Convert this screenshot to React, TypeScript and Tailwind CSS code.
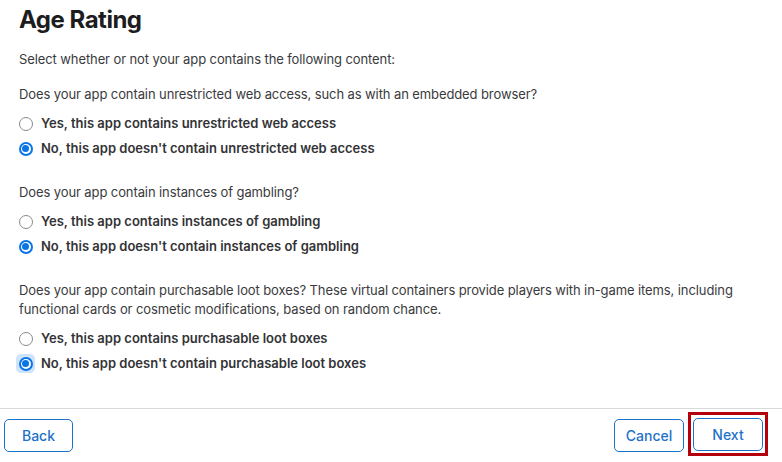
import React from "react";

function Radio({ label, checked, focused }: { label: string; checked?: boolean; focused?: boolean }) {
  return (
    <div className="flex h-[25px] items-center">
      <span
        className={
          "flex h-[19px] w-[19px] items-center justify-center rounded-[5px] " +
          (focused ? "bg-[#cfe3fb]" : "")
        }
      >
        {checked ? (
          <span className="flex h-[14px] w-[14px] items-center justify-center rounded-full bg-[#0a76e6]">
            <span className="flex h-[10px] w-[10px] items-center justify-center rounded-full bg-white">
              <span className="h-[7px] w-[7px] rounded-full bg-[#0a76e6]" />
            </span>
          </span>
        ) : (
          <span className="h-[14px] w-[14px] rounded-full border border-[#8a8a8e] bg-white" />
        )}
      </span>
      <span className="ml-[6px] text-[13px] font-semibold text-[#333336]">{label}</span>
    </div>
  );
}

function Section({ question, yes, no, focused }: { question: React.ReactNode; yes: string; no: string; focused?: boolean }) {
  return (
    <div>
      <p className="text-[13px] leading-[19px] tracking-[-0.1px] text-[#3a3a3c]">{question}</p>
      <div className="mt-[7px] -ml-[3px]">
        <Radio label={yes} />
        <Radio label={no} checked focused={focused} />
      </div>
    </div>
  );
}

export default function App() {
  return (
    <div className="h-[462px] w-[782px] overflow-hidden bg-white font-['Inter',sans-serif]">
      <div className="px-[19px]">
        <h1 className="h-[40px] text-[24px] font-bold leading-[40px] tracking-[-0.5px] text-[#1d1d1f]">Age Rating</h1>
        <p className="mt-[10px] text-[13px] leading-[19px] tracking-[-0.1px] text-[#3a3a3c]">
          Select whether or not your app contains the following content:
        </p>
        <div className="mt-[16px] flex flex-col gap-[22px]">
          <Section
            question="Does your app contain unrestricted web access, such as with an embedded browser?"
            yes="Yes, this app contains unrestricted web access"
            no="No, this app doesn't contain unrestricted web access"
          />
          <Section
            question="Does your app contain instances of gambling?"
            yes="Yes, this app contains instances of gambling"
            no="No, this app doesn't contain instances of gambling"
          />
          <Section
            question="Does your app contain purchasable loot boxes? These virtual containers provide players with in-game items, including functional cards or cosmetic modifications, based on random chance."
            yes="Yes, this app contains purchasable loot boxes"
            no="No, this app doesn't contain purchasable loot boxes"
            focused
          />
        </div>
      </div>
      <div className="mt-[32px] border-t border-[#d9d9dc]">
        <div className="flex items-start justify-between pl-[4px] pr-[14px] pt-[3px]">
          <button className="mt-[7px] h-[33px] w-[69px] rounded-[5px] border border-[#1d72c9] bg-white text-[14px] font-medium text-[#1d72c9]">
            Back
          </button>
          <div className="flex items-start gap-[4px]">
            <button className="mt-[7px] h-[33px] w-[70px] rounded-[5px] border border-[#1d72c9] bg-white text-[14px] font-medium text-[#1d72c9]">
              Cancel
            </button>
            <div className="border-[3px] border-[#b3000c] p-[2px] pt-[3px]">
              <button className="block h-[33px] w-[70px] rounded-[5px] border border-[#1d72c9] bg-white text-[14px] font-medium text-[#1d72c9]">
                Next
              </button>
            </div>
          </div>
        </div>
      </div>
    </div>
  );
}
